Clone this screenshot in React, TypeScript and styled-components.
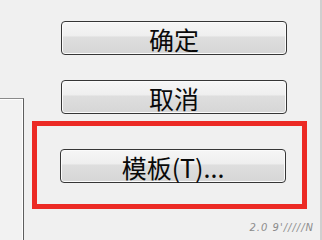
import React from "react";
import styled, { createGlobalStyle } from "styled-components";

const GlobalStyle = createGlobalStyle`
  html, body {
    margin: 0;
    padding: 0;
    background: #f0f0f0;
  }
  body {
    font-family: "Noto Sans CJK SC", "Noto Sans", sans-serif;
  }
`;

const Screen = styled.div`
  width: 322px;
  height: 240px;
  display: flex;
  overflow: hidden;
  background: #f0f0f0;
  border-right: 2px solid #cfcfcf;
  box-sizing: border-box;
`;

const SidePanel = styled.div`
  width: 24px;
  margin-top: 98px;
  border-top: 1px solid #8a8a8a;
  border-right: 1.5px solid #5e5e5e;
  box-shadow: inset -1px 1px 0 #ffffff;
  background: #f2f2f2;
  box-sizing: border-box;
  flex-shrink: 0;
`;

const Main = styled.div`
  flex: 1;
  display: flex;
  flex-direction: column;
  padding: 21px 0 0 8px;
`;

const ButtonRow = styled.div<{ $gap: number }>`
  display: flex;
  padding-left: 29px;
  margin-bottom: ${(p) => p.$gap}px;
`;

const Highlight = styled.div`
  width: 275px;
  height: 88px;
  box-sizing: border-box;
  border: 5.5px solid #ec2a24;
  padding: 23px 0 0 23px;
  display: flex;
`;

const Button = styled.button`
  width: 226px;
  height: 34px;
  box-sizing: border-box;
  border: 1.5px solid #363636;
  border-radius: 4px;
  background: linear-gradient(
    to bottom,
    #f6f6f6 0%,
    #efefef 42%,
    #dedede 48%,
    #d6d6d6 100%
  );
  box-shadow: inset 0 0 0 1px #fbfbfb;
  font-family: "Noto Sans CJK SC", "Noto Sans", sans-serif;
  font-size: 25px;
  font-weight: 400;
  line-height: 1;
  color: #0a0a0a;
  display: flex;
  align-items: center;
  justify-content: center;
  padding: 3px 0 0;
  cursor: default;
`;

const Watermark = styled.div`
  margin-top: 13px;
  align-self: flex-end;
  margin-right: 6px;
  font-family: "DejaVu Sans", sans-serif;
  font-style: italic;
  font-size: 10px;
  letter-spacing: 1px;
  color: #8c8c8c;
`;

export default function App() {
  return (
    <>
      <GlobalStyle />
      <Screen>
        <SidePanel />
        <Main>
          <ButtonRow $gap={25}>
            <Button>确定</Button>
          </ButtonRow>
          <ButtonRow $gap={7}>
            <Button>取消</Button>
          </ButtonRow>
          <Highlight>
            <Button>模板(T)...</Button>
          </Highlight>
          <Watermark>2.0 9'/////N</Watermark>
        </Main>
      </Screen>
    </>
  );
}
